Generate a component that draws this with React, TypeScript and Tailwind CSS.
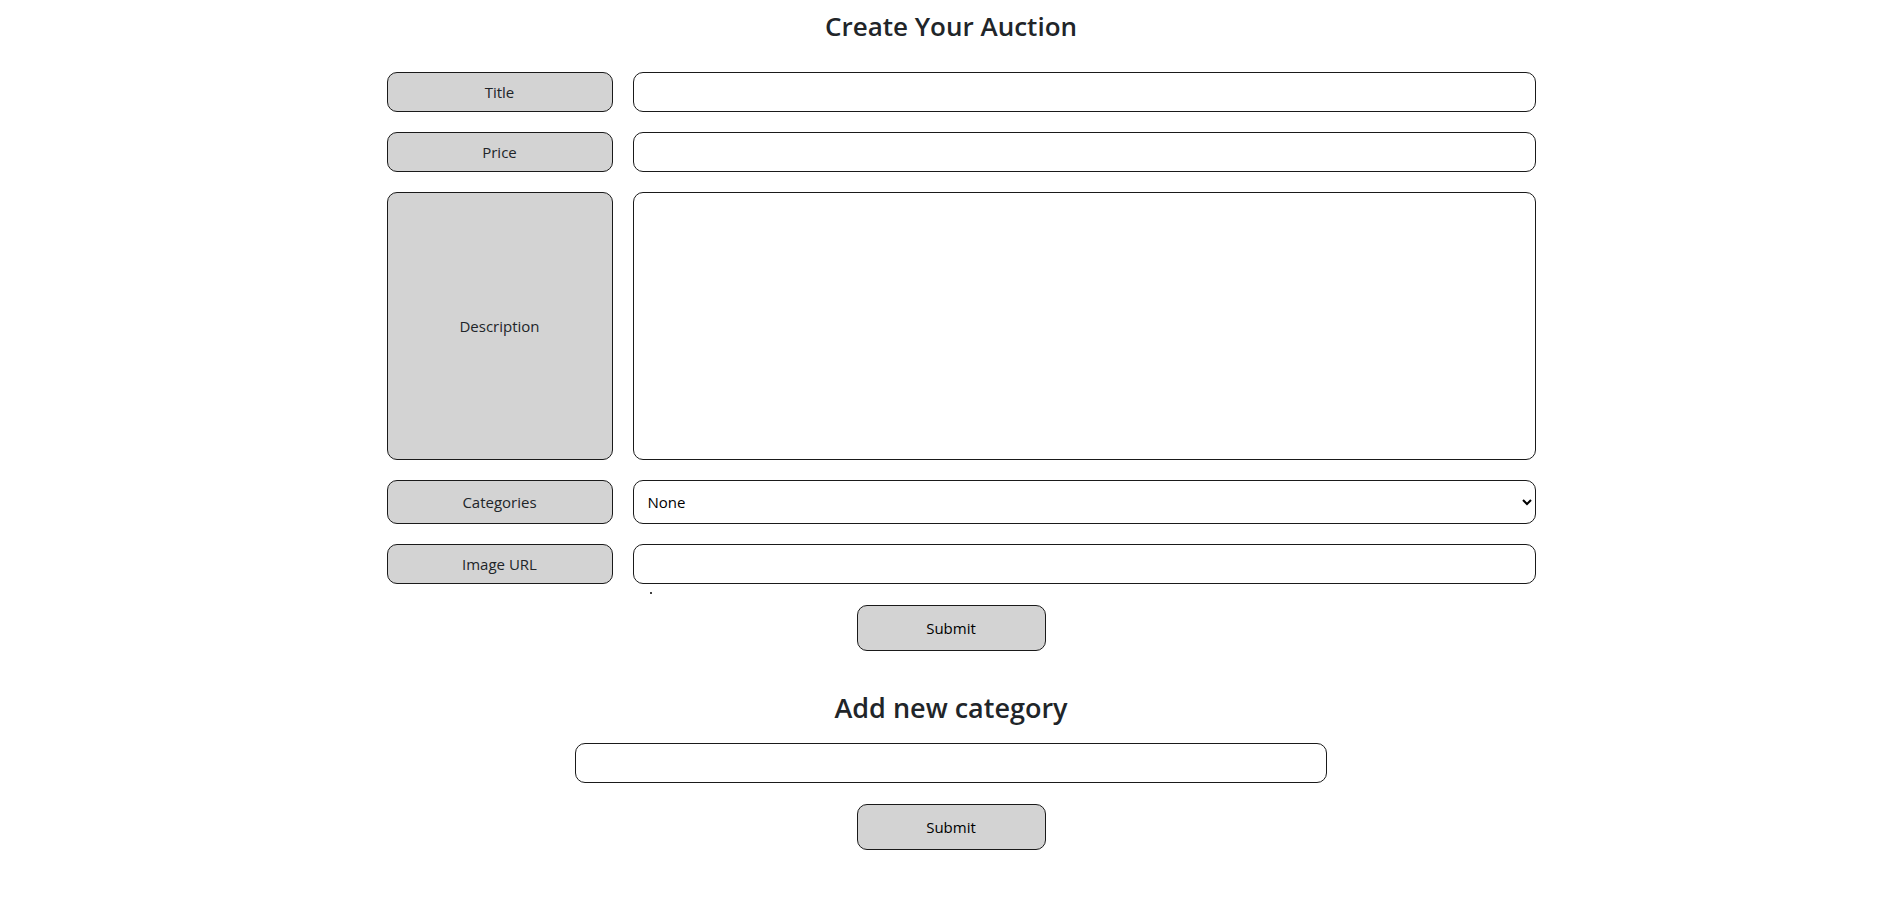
import { useState } from 'react';

const labelCls =
  'flex items-center justify-center rounded-[10px] border border-[#1a1a1a] bg-[#d3d3d3] text-[15px] text-[#212529]';
const fieldCls =
  'w-full rounded-[10px] border border-[#1a1a1a] bg-white px-[12px] text-[15px] text-black outline-none';
const btnCls =
  'w-[189px] h-[46px] rounded-[10px] border border-[#1a1a1a] bg-[#d3d3d3] text-[15px] text-black';

const App = () => {
  const [title, setTitle] = useState('');
  const [price, setPrice] = useState('');
  const [description, setDescription] = useState('');
  const [category, setCategory] = useState('None');
  const [imageUrl, setImageUrl] = useState('');
  const [newCategory, setNewCategory] = useState('');

  return (
    <div className="min-h-screen bg-white font-['Open_Sans',sans-serif] text-[#212529]">
      {/* Auction form */}
      <h1 className="pt-[8px] text-center text-[26px] leading-[36px] font-semibold">Create Your Auction</h1>

      <div className="mx-auto mt-[28px] w-[1169px] pl-[20px]">
        <div className="grid grid-cols-[226px_1fr] gap-[20px]">
          <div className={`${labelCls} h-[40px]`}>Title</div>
          <input value={title} onChange={(e) => setTitle(e.target.value)} className={`${fieldCls} h-[40px]`} />

          <div className={`${labelCls} h-[40px]`}>Price</div>
          <input value={price} onChange={(e) => setPrice(e.target.value)} className={`${fieldCls} h-[40px]`} />

          <div className={`${labelCls} h-[268px]`}>Description</div>
          <textarea
            value={description}
            onChange={(e) => setDescription(e.target.value)}
            className={`${fieldCls} h-[268px] resize-none py-[8px]`}
          />

          <div className={`${labelCls} h-[44px]`}>Categories</div>
          <select
            value={category}
            onChange={(e) => setCategory(e.target.value)}
            className={`${fieldCls} h-[44px] pl-[10px] pr-[4px]`}
          >
            <option>None</option>
          </select>

          <div className={`${labelCls} h-[40px]`}>Image URL</div>
          <input value={imageUrl} onChange={(e) => setImageUrl(e.target.value)} className={`${fieldCls} h-[40px]`} />
        </div>

        <div className="ml-[263px] mt-[8px] h-[2px] w-[2px] rounded-full bg-black" />
      </div>

      <div className="mt-[11px] flex justify-center">
        <button className={btnCls}>Submit</button>
      </div>

      {/* New category */}
      <h2 className="mt-[39px] text-center text-[27px] leading-[36px] font-semibold">Add new category</h2>

      <div className="mt-[17px] flex justify-center">
        <input
          value={newCategory}
          onChange={(e) => setNewCategory(e.target.value)}
          className="h-[40px] w-[752px] rounded-[10px] border border-[#1a1a1a] bg-white px-[12px] text-[15px] outline-none"
        />
      </div>

      <div className="mt-[21px] flex justify-center">
        <button className={btnCls}>Submit</button>
      </div>
    </div>
  );
};

export default App;
